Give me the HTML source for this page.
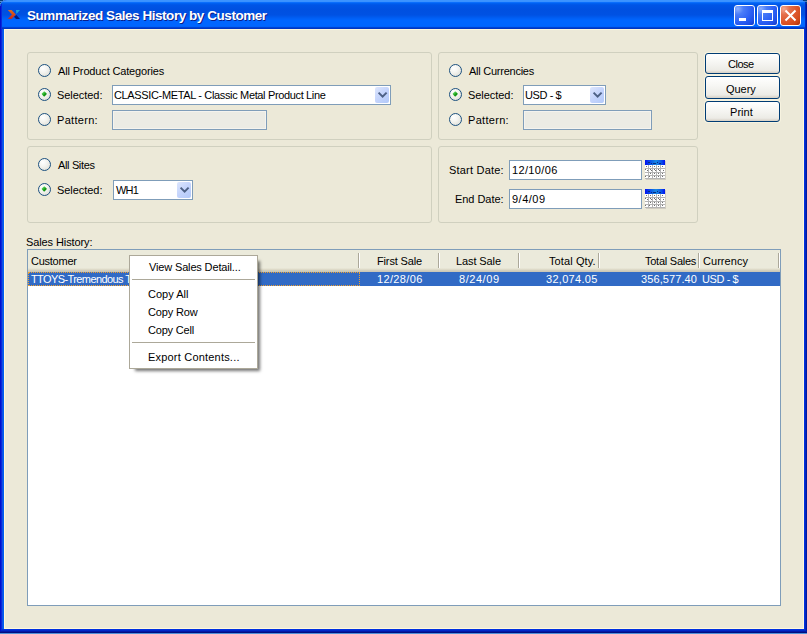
<!DOCTYPE html>
<html><head><meta charset="utf-8">
<style>
*{box-sizing:border-box;margin:0;padding:0}
html,body{width:807px;height:634px;overflow:hidden;background:#5090d8}
body{position:relative;font:11px/13px "Liberation Sans",sans-serif;color:#000}
.a{position:absolute}
.t{position:absolute;white-space:pre;font:11px/13px "Liberation Sans",sans-serif;color:#000}
#win{left:0;top:0;width:807px;height:633px;background:#0a2ad8;border-radius:7px 7px 0 0;overflow:hidden}
#tb{left:0;top:0;width:807px;height:29px;background:linear-gradient(180deg,#3d95ff 0px,#3a92ff 1.5px,#0a6efc 2.5px,#0060f0 3.5px,#0055e6 5px,#0050e0 10px,#0052e3 15px,#0060f6 18.5px,#0066ff 20.5px,#0066ff 26.4px,#0046d6 27.3px,#0036c2 28.5px,#0030b8 29px)}
#content{left:4px;top:29px;width:800px;height:600px;background:#ece9d8;border-left:1px solid #fff8dc;border-top:1px solid #fff8dc;border-right:1px solid #fff8dc;border-bottom:1px solid #fff8dc}
.grp{position:absolute;border:1px solid #d0d0bf;border-radius:3px}
.radio{position:absolute;width:13px;height:13px;border-radius:50%;border:1px solid #1c5180;background:radial-gradient(circle at 35% 30%,#ffffff 0%,#f4f4f0 40%,#d8d8d0 100%)}
.radio.on::after{content:"";position:absolute;left:3.3px;top:3.3px;width:4.4px;height:4.4px;border-radius:0.8px;transform:rotate(45deg);background:linear-gradient(90deg,#60d860,#1aa01a 60%,#0a8a0a)}
.edit{position:absolute;border:1px solid #7f9db9;background:#fff}
.edit.dis{background:#ebebe4;box-shadow:inset 0 0 0 1px #f4f3ee}
.ddb{position:absolute;width:14px;height:16px;border-radius:2px;background:linear-gradient(135deg,#dde6fd 0%,#c4d4fc 50%,#b2c9f9 100%)}
.ddb svg{position:absolute;left:0;top:0}
.btn{position:absolute;border:1px solid #003c74;border-radius:3px;background:linear-gradient(180deg,#fff 0%,#f7f7f4 40%,#ecebe6 85%,#d6d0c5 100%);box-shadow:0 0 0 1px rgba(255,250,230,.6)}
.hdr{position:absolute;top:250px;height:22px;background:linear-gradient(180deg,#ebeadb 0px,#ebeadb 18px,#e2dfcd 19px,#d9d5c3 20px,#cbc7b8 21px)}
.sep{position:absolute;top:3px;width:2px;height:15px;border-left:1px solid #aca899;border-right:1px solid #fff}
.menu{position:absolute;left:129px;top:255px;width:129px;height:114px;background:#fff;border:1px solid #aca899;box-shadow:4px 4px 3px -2px rgba(0,0,0,.55)}
.msep{position:absolute;left:2px;width:123px;height:1px;background:#aca899}
</style></head><body>
<div id="win" class="a">
  <div id="tb" class="a"></div>
</div>
<div class="a" style="left:0;top:6px;width:1px;height:627px;background:#0010d0"></div>
<div class="a" style="left:1px;top:4px;width:1px;height:629px;background:#0a2ad8"></div>
<div class="a" style="left:2px;top:29px;width:1px;height:600px;background:#1050e6"></div>
<div class="a" style="left:3px;top:29px;width:1px;height:600px;background:#0060f0"></div>
<div class="a" style="left:804px;top:29px;width:1px;height:600px;background:#0030e0"></div>
<div class="a" style="left:805px;top:2px;width:1px;height:631px;background:#0028c0"></div>
<div class="a" style="left:806px;top:4px;width:1px;height:629px;background:#0018a0"></div>
<div class="a" style="left:2px;top:629px;width:802px;height:1px;background:#0030e0"></div>
<div class="a" style="left:1px;top:630px;width:804px;height:1px;background:#0028c8"></div>
<div class="a" style="left:0;top:631px;width:807px;height:1px;background:#0018a8"></div>
<div class="a" style="left:0;top:632px;width:807px;height:1px;background:#000e80"></div>
<div id="content" class="a"></div>
<div class="a" style="left:0;top:0;width:3px;height:1px;background:#05407e"></div>
<div class="a" style="left:0;top:1px;width:2px;height:1px;background:#5a90d0"></div>
<div class="a" style="left:0;top:2px;width:1px;height:1px;background:#05407e"></div>
<div class="a" style="left:0;top:3px;width:1px;height:1px;background:#5a90d0"></div>
<div class="a" style="left:803px;top:0;width:4px;height:1px;background:#05407e"></div>
<div class="a" style="left:805px;top:1px;width:2px;height:1px;background:#4a80c0"></div>
<div class="a" style="left:806px;top:2px;width:1px;height:2px;background:#05407e"></div>


<!-- title icon -->
<svg class="a" style="left:7px;top:9px" width="14" height="11" viewBox="0 0 14 11">
  <defs>
    <linearGradient id="og" x1="0" y1="0" x2="0" y2="1"><stop offset="0" stop-color="#dc6e1c"/><stop offset="1" stop-color="#cc2618"/></linearGradient>
  </defs>
  <path d="M0.8 1h3.8l4.2 4.5l-4.2 4.5h-3.8l4.2-4.5z" fill="url(#og)"/>
  <path d="M9 1h4l-3.6 4z" fill="#1aa6d8"/>
  <path d="M9.4 6l3.6 4h-4l-2-2.2z" fill="#061a7a"/>
</svg>
<div class="t" style="left:27px;top:8px;font:bold 13.5px/16px 'Liberation Sans',sans-serif;color:#fff;letter-spacing:-0.45px;text-shadow:1px 1px #0a1e8a">Summarized Sales History by Customer</div>

<!-- title buttons -->
<div class="a" style="left:734px;top:5px;width:21px;height:21px;border:1px solid #fff;border-radius:3px;background:radial-gradient(circle at 15% 15%,#8cb0ff 0%,#4a7cf8 25%,#2c60f4 60%,#2050e8 80%,#1438c0 100%)"></div>
<div class="a" style="left:739px;top:18px;width:7px;height:3px;background:#fff"></div>
<div class="a" style="left:757px;top:5px;width:21px;height:21px;border:1px solid #fff;border-radius:3px;background:radial-gradient(circle at 15% 15%,#8cb0ff 0%,#4a7cf8 25%,#2c60f4 60%,#2050e8 80%,#1438c0 100%)"></div>
<div class="a" style="left:762px;top:10px;width:11px;height:11px;border:1px solid #fff;border-top-width:3px"></div>
<div class="a" style="left:780px;top:5px;width:21px;height:21px;border:1px solid #fff;border-radius:3px;background:radial-gradient(circle at 15% 15%,#f4a890 0%,#e4704c 25%,#dc5428 60%,#d04818 80%,#a82c08 100%)"></div>
<svg class="a" style="left:780px;top:5px" width="21" height="21" viewBox="0 0 21 21"><path d="M5.5 5.5L15.5 15.5M15.5 5.5L5.5 15.5" stroke="#fff" stroke-width="2"/></svg>

<!-- group boxes -->
<div class="grp" style="left:27px;top:52px;width:405px;height:88px"></div>
<div class="grp" style="left:438px;top:52px;width:260px;height:88px"></div>
<div class="grp" style="left:27px;top:146px;width:405px;height:77px"></div>
<div class="grp" style="left:438px;top:146px;width:260px;height:77px"></div>

<!-- group 1 -->
<div class="radio" style="left:38px;top:64px"></div>
<div class="t" style="left:58px;top:65px;letter-spacing:-0.15px">All Product Categories</div>
<div class="radio on" style="left:38px;top:88px"></div>
<div class="t" style="left:57px;top:89px;letter-spacing:-0.05px">Selected:</div>
<div class="radio" style="left:38px;top:113px"></div>
<div class="t" style="left:57px;top:114px;letter-spacing:0.3px">Pattern:</div>
<div class="edit" style="left:112px;top:85px;width:279px;height:20px"></div>
<div class="t" style="left:114px;top:89px;letter-spacing:-0.35px">CLASSIC-METAL - Classic Metal Product Line</div>
<div class="ddb" style="left:375px;top:87px"><svg width="14" height="16"><path d="M3.6 5.6l4 4l4-4" stroke="#4d6185" stroke-width="2" fill="none"/></svg></div>
<div class="edit dis" style="left:112px;top:110px;width:155px;height:20px"></div>

<!-- group 2 -->
<div class="radio" style="left:449px;top:64px"></div>
<div class="t" style="left:469px;top:65px;letter-spacing:-0.25px">All Currencies</div>
<div class="radio on" style="left:449px;top:88px"></div>
<div class="t" style="left:468px;top:89px;letter-spacing:-0.05px">Selected:</div>
<div class="radio" style="left:449px;top:113px"></div>
<div class="t" style="left:468px;top:114px;letter-spacing:0.3px">Pattern:</div>
<div class="edit" style="left:523px;top:85px;width:83px;height:20px"></div>
<div class="t" style="left:525px;top:89px;letter-spacing:-0.4px">USD - $</div>
<div class="ddb" style="left:590px;top:87px"><svg width="14" height="16"><path d="M3.6 5.6l4 4l4-4" stroke="#4d6185" stroke-width="2" fill="none"/></svg></div>
<div class="edit dis" style="left:523px;top:110px;width:129px;height:20px"></div>

<!-- buttons -->
<div class="btn" style="left:705px;top:53px;width:75px;height:21px"></div>
<div class="t" style="left:728px;top:58px;letter-spacing:-0.5px">Close</div>
<div class="btn" style="left:705px;top:76px;width:75px;height:23px"></div>
<div class="t" style="left:726px;top:83px;letter-spacing:-0.05px">Query</div>
<div class="btn" style="left:705px;top:101px;width:75px;height:21px"></div>
<div class="t" style="left:730px;top:106px;letter-spacing:0.05px">Print</div>

<!-- group 3 -->
<div class="radio" style="left:38px;top:158px"></div>
<div class="t" style="left:58px;top:159px;letter-spacing:-0.35px">All Sites</div>
<div class="radio on" style="left:38px;top:183px"></div>
<div class="t" style="left:57px;top:184px;letter-spacing:-0.05px">Selected:</div>
<div class="edit" style="left:113px;top:180px;width:80px;height:20px"></div>
<div class="t" style="left:116px;top:184px;letter-spacing:-0.8px">WH1</div>
<div class="ddb" style="left:177px;top:182px"><svg width="14" height="16"><path d="M3.6 5.6l4 4l4-4" stroke="#4d6185" stroke-width="2" fill="none"/></svg></div>

<!-- group 4 -->
<div class="t" style="left:449px;top:164px;letter-spacing:0.2px">Start Date:</div>
<div class="edit" style="left:509px;top:160px;width:133px;height:20px"></div>
<div class="t" style="left:512px;top:164px;letter-spacing:0.35px">12/10/06</div>
<div class="t" style="left:455px;top:193px;letter-spacing:-0.05px">End Date:</div>
<div class="edit" style="left:509px;top:189px;width:133px;height:20px"></div>
<div class="t" style="left:512px;top:193px;letter-spacing:0.5px">9/4/09</div>
<svg class="a" style="left:645px;top:160px" width="21" height="20" viewBox="0 0 21 20" shape-rendering="crispEdges">
  <defs><linearGradient id="cg1" x1="0" y1="0" x2="1" y2="0"><stop offset="0" stop-color="#0010f0"/><stop offset="0.3" stop-color="#0a58e8"/><stop offset="0.55" stop-color="#1888e0"/><stop offset="0.8" stop-color="#0a58e8"/><stop offset="1" stop-color="#0010f0"/></linearGradient></defs>
  <rect x="1" y="1" width="20" height="19" fill="#d0ccc0"/>
  <rect x="0" y="0" width="20" height="5" fill="url(#cg1)"/>
  <path d="M3 2h2M6 3h1M8 3h3M12 2h1M14 3h2" stroke="#0a2a80"/>
  <rect x="0" y="5" width="20" height="14" fill="#fff"/>
  <path d="M0 8.5h20M0 12.5h20M0 15.5h20M0 18.5h20M3.5 5v14M7.5 5v14M11.5 5v14M15.5 5v14" stroke="#b4b4b4"/>
  <path d="M17 6h1M0 9h1M5 9h1M9 9h1M13 9h1M5 13h1M9 13h1M13 13h1M17 13h1M0 16h1M4 16h1M9 16h1M13 16h1M17 16h1M1 6h1M5 6h1M9 6h1M13 6h1M2 10h1M6 10h1M10 10h1M14 10h1M18 10h1" stroke="#707070"/>
</svg>
<svg class="a" style="left:645px;top:189px" width="21" height="20" viewBox="0 0 21 20" shape-rendering="crispEdges">
  <defs><linearGradient id="cg2" x1="0" y1="0" x2="1" y2="0"><stop offset="0" stop-color="#0010f0"/><stop offset="0.3" stop-color="#0a58e8"/><stop offset="0.55" stop-color="#1888e0"/><stop offset="0.8" stop-color="#0a58e8"/><stop offset="1" stop-color="#0010f0"/></linearGradient></defs>
  <rect x="1" y="1" width="20" height="19" fill="#d0ccc0"/>
  <rect x="0" y="0" width="20" height="5" fill="url(#cg2)"/>
  <path d="M3 2h2M6 3h1M8 3h3M12 2h1M14 3h2" stroke="#0a2a80"/>
  <rect x="0" y="5" width="20" height="14" fill="#fff"/>
  <path d="M0 8.5h20M0 12.5h20M0 15.5h20M0 18.5h20M3.5 5v14M7.5 5v14M11.5 5v14M15.5 5v14" stroke="#b4b4b4"/>
  <path d="M17 6h1M0 9h1M5 9h1M9 9h1M13 9h1M5 13h1M9 13h1M13 13h1M17 13h1M0 16h1M4 16h1M9 16h1M13 16h1M17 16h1M1 6h1M5 6h1M9 6h1M13 6h1M2 10h1M6 10h1M10 10h1M14 10h1M18 10h1" stroke="#707070"/>
</svg>

<!-- sales history -->
<div class="t" style="left:26px;top:236px;letter-spacing:-0.1px">Sales History:</div>
<div class="a" style="left:27px;top:249px;width:754px;height:357px;border:1px solid #7f9db9;background:#fff"></div>
<div class="hdr" style="left:28px;width:752px"></div>
<div class="a" style="left:28px;top:250px">
  <div class="sep" style="left:330px"></div>
  <div class="sep" style="left:410px"></div>
  <div class="sep" style="left:490px"></div>
  <div class="sep" style="left:570px"></div>
  <div class="sep" style="left:670px"></div>
  <div class="sep" style="left:750px"></div>
</div>
<div class="t" style="left:31px;top:255px;letter-spacing:-0.25px">Customer</div>
<div class="t" style="left:377px;top:255px;letter-spacing:-0.15px">First Sale</div>
<div class="t" style="left:456px;top:255px;letter-spacing:-0.1px">Last Sale</div>
<div class="t" style="left:549px;top:255px;letter-spacing:0.1px">Total Qty.</div>
<div class="t" style="left:645px;top:255px;letter-spacing:-0.25px">Total Sales</div>
<div class="t" style="left:703px;top:255px;letter-spacing:0.05px">Currency</div>

<div class="a" style="left:28px;top:272px;width:752px;height:14px;background:#316ac5"></div>
<div class="a" style="left:28px;top:272px;width:332px;height:14px;border:1px dotted #f0a030"></div>
<div class="t" style="left:31px;top:273px;color:#fff;letter-spacing:-0.6px">TTOYS-Tremendous T</div>
<div class="t" style="left:377px;top:273px;color:#fff;letter-spacing:0.35px">12/28/06</div>
<div class="t" style="left:459px;top:273px;color:#fff;letter-spacing:0.55px">8/24/09</div>
<div class="t" style="left:546px;top:273px;color:#fff;letter-spacing:0.3px">32,074.05</div>
<div class="t" style="left:641px;top:273px;color:#fff;letter-spacing:0.1px">356,577.40</div>
<div class="t" style="left:702px;top:273px;color:#fff;letter-spacing:-0.4px">USD - $</div>

<!-- context menu -->
<div class="menu">
  <div class="msep" style="top:23px"></div>
  <div class="msep" style="top:86px"></div>
</div>
<div class="t" style="left:149px;top:261px;letter-spacing:-0.15px">View Sales Detail...</div>
<div class="t" style="left:148px;top:288px">Copy All</div>
<div class="t" style="left:148px;top:306px;letter-spacing:-0.15px">Copy Row</div>
<div class="t" style="left:148px;top:324px;letter-spacing:-0.2px">Copy Cell</div>
<div class="t" style="left:148px;top:351px;letter-spacing:0.2px">Export Contents...</div>
</body></html>
